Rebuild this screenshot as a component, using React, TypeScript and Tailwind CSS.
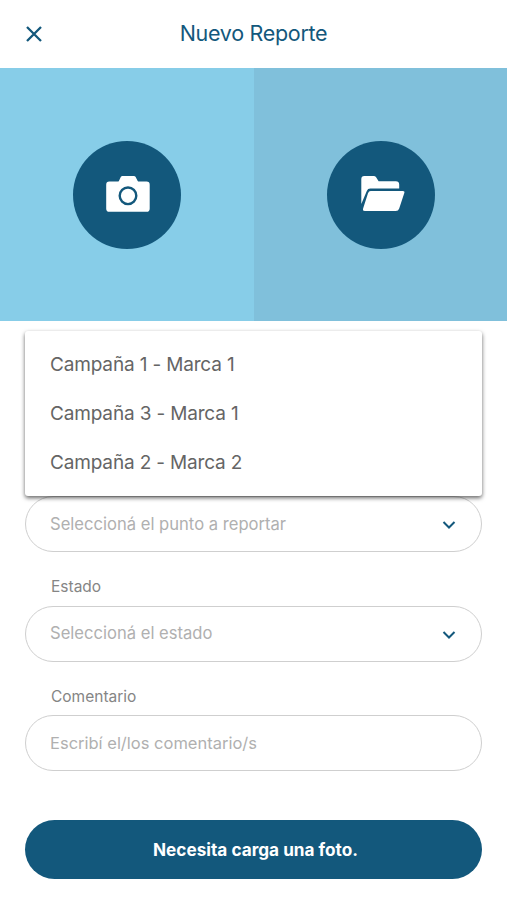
import React from 'react';

const campaigns = ['Campaña 1 - Marca 1', 'Campaña 3 - Marca 1', 'Campaña 2 - Marca 2'];

function CloseIcon() {
  return (
    <svg width="18" height="18" viewBox="0 0 18 18" fill="none" stroke="#13587c" strokeWidth="2.3">
      <path d="M2 2L16 16M16 2L2 16" />
    </svg>
  );
}

function CameraIcon() {
  return (
    <svg width="46" height="38" viewBox="0 0 46 38">
      <path
        fill="#fff"
        d="M4.300 6.600h8.400q.8 0 1.200-.7l2-4.100q.5-.9 1.600-.9h11.400q1.100 0 1.600.9l2.200 4.100q.4.700 1.200.7h7.700q3.100 0 3.100 3.100v24q0 3.100-3.100 3.100H4.300q-3.100 0-3.100-3.100v-24q0-3.100 3.100-3.100z"
      />
      <circle cx="23" cy="20.800" r="8.300" fill="none" stroke="#13587c" strokeWidth="2.400" />
    </svg>
  );
}

function FolderIcon() {
  return (
    <svg width="46" height="38" viewBox="0 0 46 38" fill="#fff">
      <path d="M1.300 29V3.900Q1.300 .9 4.300 .9h9.300q1.700 0 2.500 1.300l2.500 4h17.200q3.400 0 3.400 3.400v3.900H10.300q-2.600 0-3.500 2.400z" />
      <path d="M10.700 15.900h32.100q2.200 0 1.500 2.200l-5.100 15.300q-.8 2.500-3.400 2.500H4.800q-2.400 0-1.700-2.500l4.900-15.200q.8-2.300 2.700-2.300z" />
    </svg>
  );
}

function ChevronIcon() {
  return (
    <svg width="14" height="10" viewBox="0 0 14 10" fill="none" stroke="#13587c" strokeWidth="2">
      <path d="M1.500 2L7 7.500L12.500 2" />
    </svg>
  );
}

function SelectField({ text }: { text: string }) {
  return (
    <button
      type="button"
      className="flex h-14 w-full items-center justify-between rounded-full border border-[#cfcfcf] bg-white pr-[25px] pl-6 text-[16.6px] text-[#b0b0b0]"
    >
      {text}
      <span className="mt-0.5">
        <ChevronIcon />
      </span>
    </button>
  );
}

export default function App() {
  return (
    <div className="flex h-[900px] w-[507px] flex-col overflow-hidden bg-white font-['Inter','Liberation_Sans',sans-serif]">
      <header className="grid h-[68px] shrink-0 grid-cols-[80px_1fr_80px] items-center">
        <button type="button" aria-label="Cerrar" className="ml-[25px] w-[18px]">
          <CloseIcon />
        </button>
        <h1 className="pb-0.5 text-center text-[21.5px] leading-7 tracking-[-0.3px] text-[#13587c]">Nuevo Reporte</h1>
      </header>

      <div className="grid h-[253px] shrink-0 grid-cols-[254px_1fr]">
        <div className="flex items-center justify-center bg-[#87cde8]">
          <button type="button" aria-label="Cámara" className="flex size-[108px] items-center justify-center rounded-full bg-[#13587c] pb-px pl-0.5">
            <CameraIcon />
          </button>
        </div>
        <div className="flex items-center justify-center bg-[#80c0db]">
          <button type="button" aria-label="Galería" className="flex size-[108px] items-center justify-center rounded-full bg-[#13587c] pb-px pl-[5px]">
            <FolderIcon />
          </button>
        </div>
      </div>

      <form className="relative flex flex-col px-[25px] pt-[175px]">
        <SelectField text="Seleccioná el punto a reportar" />

        <label className="mt-[24px] mb-[7.5px] pl-[26px] text-[15.5px] leading-[22px] text-[#858585]">Estado</label>
        <SelectField text="Seleccioná el estado" />

        <label className="mt-[24px] mb-[7.5px] pl-[26px] text-[15.5px] leading-[22px] text-[#858585]">Comentario</label>
        <input
          type="text"
          placeholder="Escribí el/los comentario/s"
          className="h-14 w-full rounded-full border border-[#cfcfcf] bg-white px-6 text-[16.5px] placeholder:text-[#b0b0b0]"
        />

        <button type="button" className="mt-[49px] h-[59px] w-full rounded-full bg-[#13587c] pl-1 text-[17.2px] font-bold text-white">
          Necesita carga una foto.
        </button>

        {/* lista de campañas abierta sobre el formulario */}
        <ul className="absolute inset-x-[25px] top-[10px] h-[165px] rounded-[3px] bg-white pt-[10px] pl-[25px] shadow-[0_2px_4px_rgba(0,0,0,0.6)]">
          {campaigns.map((name) => (
            <li key={name} className="flex h-[49px] items-center text-[19px] tracking-[-0.16px] text-[#656565]">
              {name}
            </li>
          ))}
        </ul>
      </form>
    </div>
  );
}
